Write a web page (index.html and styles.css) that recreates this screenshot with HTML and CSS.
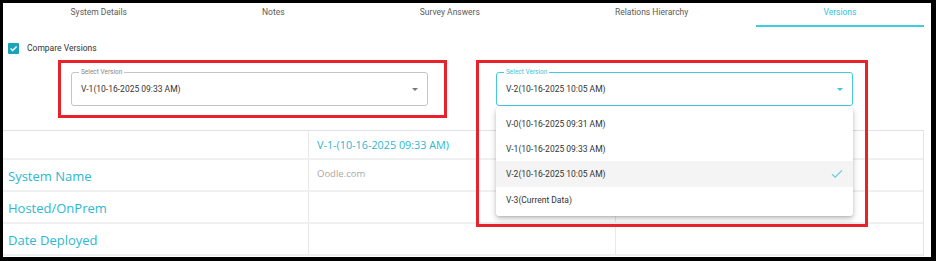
FILE: index.html
```html
<!DOCTYPE html>
<html>
<head>
<meta charset="utf-8">
<link rel="stylesheet" href="styles.css">
</head>
<body>
<div class="frame">
  <nav class="tabs">
    <div class="tab">System Details</div>
    <div class="tab">Notes</div>
    <div class="tab">Survey Answers</div>
    <div class="tab">Relations Hierarchy</div>
    <div class="tab active">Versions</div>
  </nav>

  <label class="compare">
    <span class="checkbox"><svg width="9" height="9" viewBox="0 0 9 9"><path d="M1.6 4.6 L3.6 6.6 L7.6 2.4" fill="none" stroke="#fff" stroke-width="1.4"/></svg></span>
    <span>Compare Versions</span>
  </label>

  <div class="select-row">
    <div class="annot">
      <div class="select">
        <span class="select-label">Select Version</span>
        <span class="select-value">V-1(10-16-2025 09:33 AM)</span>
        <span class="arrow"></span>
      </div>
    </div>
    <div class="annot annot-open">
      <div class="select focused">
        <span class="select-label">Select Version</span>
        <span class="select-value">V-2(10-16-2025 10:05 AM)</span>
        <span class="arrow"></span>
        <ul class="menu">
          <li class="menu-item">V-0(10-16-2025 09:31 AM)</li>
          <li class="menu-item">V-1(10-16-2025 09:33 AM)</li>
          <li class="menu-item selected">V-2(10-16-2025 10:05 AM)<svg class="tick" width="12" height="10" viewBox="0 0 12 10"><path d="M1 5.2 L4.2 8.2 L11 1.4" fill="none" stroke="#5ccbdc" stroke-width="1.1"/></svg></li>
          <li class="menu-item">V-3(Current Data)</li>
        </ul>
      </div>
    </div>
  </div>

  <div class="table">
    <div class="row head">
      <div class="cell"></div>
      <div class="cell version">V-1-(10-16-2025 09:33 AM)</div>
      <div class="cell"></div>
    </div>
    <div class="row">
      <div class="cell name">System Name</div>
      <div class="cell value">Oodle.com</div>
      <div class="cell"></div>
    </div>
    <div class="row">
      <div class="cell name">Hosted/OnPrem</div>
      <div class="cell value"></div>
      <div class="cell"></div>
    </div>
    <div class="row">
      <div class="cell name">Date Deployed</div>
      <div class="cell value"></div>
      <div class="cell"></div>
    </div>
  </div>
</div>
</body>
</html>
```

FILE: styles.css
```css
html, body {
  margin: 0;
  padding: 0;
  background: #000;
}
body {
  width: 936px;
  height: 261px;
  overflow: hidden;
  font-family: Roboto, "Liberation Sans", sans-serif;
}
.frame {
  margin: 3px 5px 0 3px;
  width: 928px;
  height: 254px;
  background: #fff;
  overflow: hidden;
}
.tabs {
  display: flex;
  width: 921px;
  height: 24px;
}
.tab {
  flex: 1 1 auto;
  display: flex;
  justify-content: center;
  align-items: center;
  box-sizing: border-box;
  height: 24px;
  padding-bottom: 4px;
  border-bottom: 2px solid transparent;
  font-size: 8.5px;
  color: #5a5a5a;
  white-space: nowrap;
}
.tab.active {
  color: #2cc3da;
  border-bottom-color: #3dcde0;
}
.compare {
  display: flex;
  align-items: center;
  gap: 8px;
  height: 20px;
  margin-top: 11px;
  padding-left: 5px;
  font-size: 8.5px;
  color: #333;
}
.checkbox {
  width: 11px;
  height: 11px;
  border-radius: 1px;
  background: #1ba3b9;
  display: flex;
  align-items: center;
  justify-content: center;
}
.select-row {
  display: flex;
  gap: 29px;
  margin-top: 2px;
  margin-left: 55px;
  height: 58px;
}
.annot {
  box-sizing: border-box;
  width: 389px;
  height: 58px;
  border: 3px solid #e8212b;
  padding: 9px 0 0 10px;
}
.annot-open {
  width: 392px;
  border-color: transparent;
  padding-left: 17px;
  position: relative;
}
.annot-open::after {
  content: "";
  position: absolute;
  left: -3px;
  top: -3px;
  width: 392px;
  height: 167px;
  box-sizing: border-box;
  border: 3px solid #e8212b;
  z-index: 3;
  pointer-events: none;
}
.select {
  position: relative;
  box-sizing: border-box;
  width: 357px;
  height: 34px;
  border: 1px solid #c4c4c4;
  border-radius: 3px;
  display: flex;
  align-items: center;
  padding-left: 9px;
}
.select.focused {
  border-color: #45c9dc;
}
.select-label {
  position: absolute;
  left: 7px;
  top: -5px;
  padding: 0 2px;
  background: #fff;
  font-size: 6.5px;
  line-height: 8px;
  color: #888;
}
.focused .select-label {
  color: #3cc4d8;
}
.select-value {
  font-size: 8.5px;
  color: #333;
}
.arrow {
  position: absolute;
  right: 9px;
  top: 15px;
  width: 0;
  height: 0;
  border-left: 3px solid transparent;
  border-right: 3px solid transparent;
  border-top: 3px solid #777;
}
.focused .arrow {
  border-top-color: #3cc4d8;
}
.menu {
  position: absolute;
  left: -1px;
  top: 34px;
  width: 357px;
  margin: 0;
  padding: 4px 0 4px;
  list-style: none;
  background: #fff;
  border-radius: 3px;
  box-shadow: 0 3px 6px rgba(0,0,0,0.22), 0 1px 2px rgba(0,0,0,0.12);
  z-index: 2;
}
.menu-item {
  position: relative;
  height: 25px;
  display: flex;
  align-items: center;
  padding-left: 10px;
  font-size: 8.5px;
  color: #333;
}
.menu-item.selected {
  background: #f4f4f4;
  height: 26px;
}
.tick {
  position: absolute;
  right: 10px;
  top: 8px;
}
.table {
  margin-top: 12px;
  width: 921px;
  border-top: 1px solid #e0e1e6;
  border-right: 1px solid #e4e4e8;
  box-sizing: border-box;
}
.row {
  display: grid;
  grid-template-columns: 305px 307px 1fr;
  height: 32px;
  border-bottom: 2px solid #f0f0f0;
  box-sizing: border-box;
}
.row.head {
  height: 29px;
}
.cell {
  display: flex;
  align-items: center;
  padding-left: 8px;
  font-family: "Open Sans", "Liberation Sans", sans-serif;
}
.cell + .cell {
  border-left: 1px solid #e8e8ec;
}
.cell.name {
  padding-left: 5px;
  font-size: 13px;
  color: #2cb8d2;
  padding-top: 1px;
}
.cell.version {
  font-size: 10.8px;
  color: #2cb8d2;
}
.cell.value {
  font-size: 9.5px;
  color: #a8a8a8;
  padding-bottom: 3px;
}
```
